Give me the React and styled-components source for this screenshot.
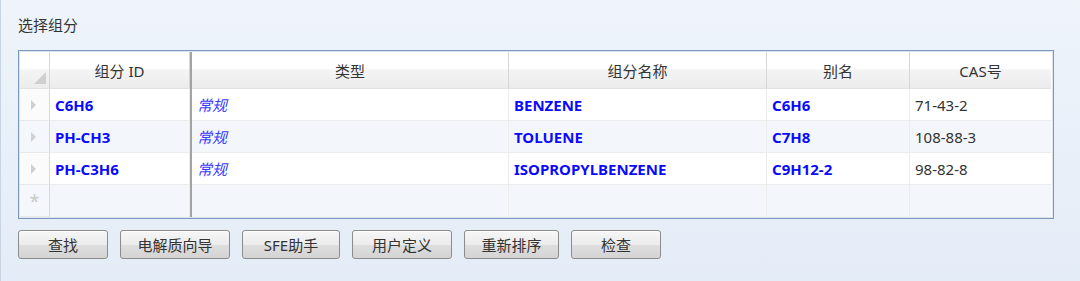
import React from 'react';
import styled, { createGlobalStyle } from 'styled-components';

const GlobalStyle = createGlobalStyle`
    html, body {
        margin: 0;
        padding: 0;
    }
    body {
        font-family: "Noto Sans", "Noto Sans CJK SC", sans-serif;
        background: #e9f0f9;
    }
`;

const Page = styled.div`
    box-sizing: border-box;
    width: 1080px;
    height: 281px;
    padding: 0 27px 0 17px;
    border-left: 1px solid #c9d4e2;
    background: linear-gradient(180deg, #eff4fb 0%, #e4ecf7 100%);
    display: flex;
    flex-direction: column;
`;

const Title = styled.div`
    height: 50px;
    line-height: 50px;
    font-size: 15px;
    color: #333;
`;

const Grid = styled.div`
    box-sizing: border-box;
    width: 1036px;
    border: 1px solid #7b98bf;
    box-shadow: inset 0 0 0 1px #dde4ee;
    background: #fff;
    display: grid;
    grid-template-columns: 30px 140px 2px 317px 258px 143px 141px;
    padding: 1px;
`;

const HeadCell = styled.div`
    height: 37px;
    box-sizing: border-box;
    display: flex;
    align-items: center;
    justify-content: center;
    font-size: 15px;
    color: #333;
    background: linear-gradient(180deg, #ffffff 0%, #ffffff 45%, #f4f4f4 50%, #ececec 100%);
    border-right: ${p => (p.$last ? 'none' : '1px solid #d6d6d6')};
    border-bottom: 1px solid #e2e2e2;
    position: relative;
`;

const Corner = styled(HeadCell)`
    border-right: 1px solid #d6d6d6;
`;

const CornerMark = styled.span`
    position: absolute;
    right: 3px;
    bottom: 4px;
    width: 0;
    height: 0;
    border-left: 12px solid transparent;
    border-bottom: 12px solid #cfcfcf;
`;

const Divider = styled.div`
    background: #a3a3a3;
`;

const RowHead = styled.div`
    height: 32px;
    box-sizing: border-box;
    background: ${p => (p.$alt ? '#f4f7fb' : '#fbfbfb')};
    border-right: 1px solid #d9d9d9;
    border-bottom: 1px solid #e9e9e9;
    display: flex;
    align-items: center;
    justify-content: center;
    color: #c8c8c8;
    font-size: 18px;
`;

const Arrow = styled.span`
    width: 0;
    height: 0;
    border-top: 5px solid transparent;
    border-bottom: 5px solid transparent;
    border-left: 5px solid #d0d0d0;
    margin-left: -3px;
`;

const Cell = styled.div`
    height: 32px;
    box-sizing: border-box;
    padding: 0 5px;
    display: flex;
    align-items: center;
    font-size: 15px;
    white-space: nowrap;
    background: ${p => (p.$alt ? '#f3f7fc' : '#ffffff')};
    border-right: ${p => (p.$last ? 'none' : '1px solid #ececec')};
    border-bottom: ${p => (p.$bottom ? 'none' : '1px solid #ececec')};
    color: ${p => (p.$kind === 'bold' ? '#0a0aff' : p.$kind === 'italic' ? '#3b3bff' : '#333')};
    font-weight: ${p => (p.$kind === 'bold' ? 700 : 400)};
    font-style: ${p => (p.$kind === 'italic' ? 'italic' : 'normal')};
`;

const Buttons = styled.div`
    display: flex;
    gap: 12px;
    margin-top: 11px;
`;

const Button = styled.button`
    box-sizing: border-box;
    width: ${p => p.$w}px;
    height: 29px;
    padding: 0;
    border: 1px solid #8c8c8c;
    border-radius: 3px;
    background: linear-gradient(180deg, #f6f6f6 0%, #ececec 50%, #dedede 52%, #d4d4d4 100%);
    box-shadow: inset 0 1px 0 #ffffff;
    font-family: "Noto Sans", "Noto Sans CJK SC", sans-serif;
    font-size: 15px;
    color: #333;
`;

const headers = ['组分 ID', '类型', '组分名称', '别名', 'CAS号'];

const rows = [
    ['C6H6', '常规', 'BENZENE', 'C6H6', '71-43-2'],
    ['PH-CH3', '常规', 'TOLUENE', 'C7H8', '108-88-3'],
    ['PH-C3H6', '常规', 'ISOPROPYLBENZENE', 'C9H12-2', '98-82-8'],
];

const kinds = ['bold', 'italic', 'bold', 'bold', 'plain'];

const buttons = [
    ['查找', 90],
    ['电解质向导', 110],
    ['SFE助手', 98],
    ['用户定义', 100],
    ['重新排序', 95],
    ['检查', 90],
];

function App() {
    return (
        <Page>
            <GlobalStyle />
            <Title>选择组分</Title>
            <Grid>
                <Corner><CornerMark /></Corner>
                <HeadCell>{headers[0]}</HeadCell>
                <Divider />
                {headers.slice(1).map((h, i) => (
                    <HeadCell key={h} $last={i === 3}>{h}</HeadCell>
                ))}

                {rows.map((r, ri) => {
                    const alt = ri % 2 === 1;
                    return (
                        <React.Fragment key={ri}>
                            <RowHead $alt={alt}><Arrow /></RowHead>
                            <Cell $alt={alt} $kind={kinds[0]}>{r[0]}</Cell>
                            <Divider />
                            {r.slice(1).map((v, ci) => (
                                <Cell key={ci} $alt={alt} $kind={kinds[ci + 1]} $last={ci === 3}>{v}</Cell>
                            ))}
                        </React.Fragment>
                    );
                })}

                {/* new row placeholder */}
                <RowHead $alt>*</RowHead>
                <Cell $alt $bottom />
                <Divider />
                {[0, 1, 2, 3].map(i => (
                    <Cell key={i} $alt $bottom $last={i === 3} />
                ))}
            </Grid>
            <Buttons>
                {buttons.map(([label, w]) => (
                    <Button key={label} $w={w}>{label}</Button>
                ))}
            </Buttons>
        </Page>
    );
}

export default App;
